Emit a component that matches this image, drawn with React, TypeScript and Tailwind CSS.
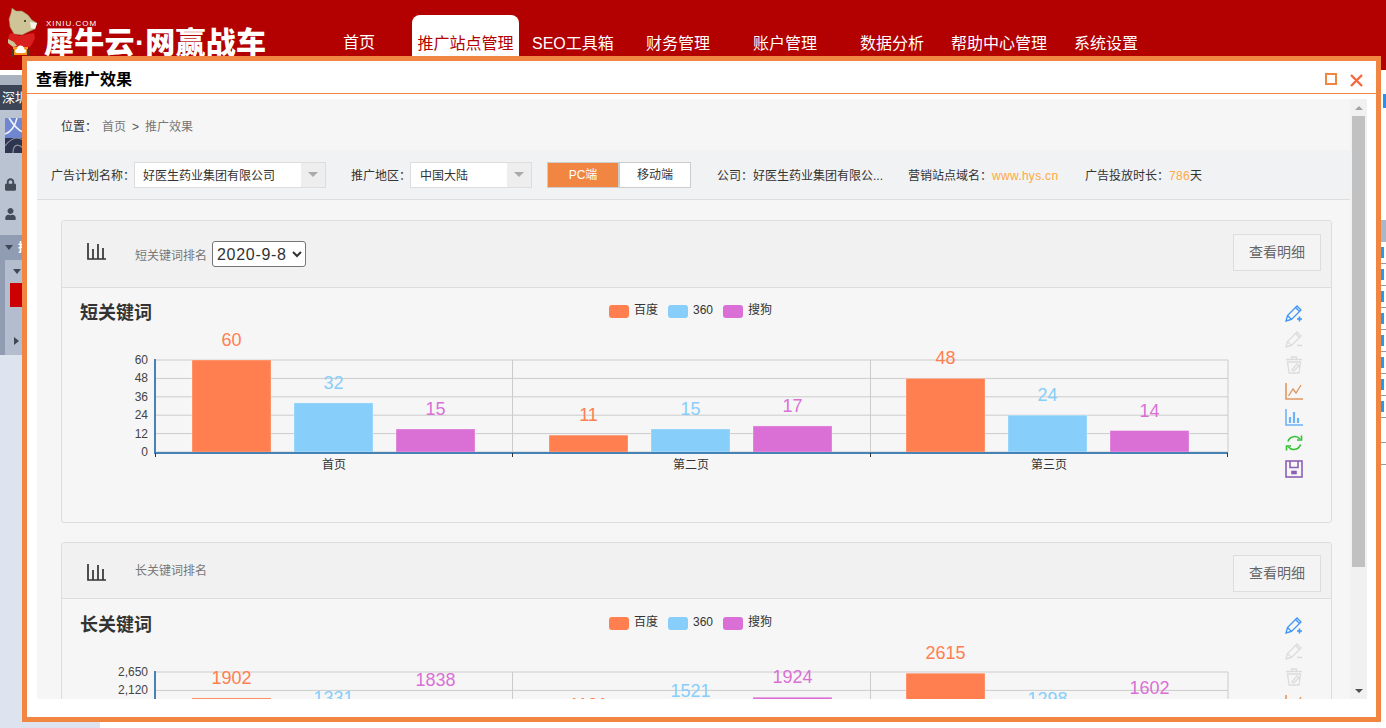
import type { ReactNode } from 'react';
import { FaLock, FaUser } from 'react-icons/fa';

const colors = ['#ff7f50', '#87cefa', '#da70d6'];
const navItems = [
  { label: '首页', width: 'w-[32px]', margin: 'ml-[343px]' },
  { label: 'SEO工具箱', width: 'w-[80px]', margin: 'ml-[13px]' },
  { label: '财务管理', width: 'w-[64px]', margin: 'ml-[34px]' },
  { label: '账户管理', width: 'w-[64px]', margin: 'ml-[43px]' },
  { label: '数据分析', width: 'w-[64px]', margin: 'ml-[43px]' },
  { label: '帮助中心管理', width: 'w-[96px]', margin: 'ml-[27px]' },
  { label: '系统设置', width: 'w-[64px]', margin: 'ml-[27px]' },
];

function Logo() {
  return (
    <svg className="absolute left-[8px] top-[7px]" width="32" height="54" viewBox="0 0 32 54">
      <path d="M4 1l4 3 6 0 6 4 4 5 5 3-2 6-7 3-6 3-8-1-4-7-1-8 2-6z" fill="#cfc497" stroke="#8d7f52" strokeWidth="0.5" />
      <path d="M22 15l7 1-2 6-4-1z" fill="#f6f4ea" />
      <circle cx="17" cy="14" r="1" fill="#222" />
      <path d="M3 26l9 3 8-2 6-1 1 5-3 6-2 3H6l-6-6 1-6z" fill="#d9201f" />
      <path d="M0 32l6 3 3 4-4 1-5-4z" fill="#cfc497" />
      <path d="M5 40h15v8H5z" fill="#f3961c" />
      <path d="M9 46a2 2 0 0 1 0-4 3.500 3.500 0 0 1 7 0 2 2 0 0 1 0 4z" fill="#fff" />
      <path d="M3 42h3v8H3zM19 42h3v8h-3z" fill="#4a3a2a" />
    </svg>
  );
}

function Sidebar() {
  return (
    <div className="w-[100px] shrink-0 flex flex-col bg-[#dde4ef]">
      <div className="h-[5px] bg-white"></div>
      <div className="h-[10px] bg-[#a9b2bf]"></div>
      <div className="h-[25px] bg-[#3b4555] text-white text-[13px] leading-[25px] pl-[2px] whitespace-nowrap">深圳</div>
      <div className="h-[125px] bg-[#b9c3d2] pl-[5px] pt-[8px] text-[#444c5a]">
        <svg width="18" height="35" viewBox="0 0 18 35">
          <rect width="18" height="20" fill="#6f86d0" />
          <rect y="20" width="18" height="15" fill="#2d3550" />
          <path d="M0 16C6 14 10 8 12 0M4 0C8 6 12 12 18 14" stroke="#f1f3f8" strokeWidth="1.6" fill="none" />
          <path d="M0 28C6 20 12 18 18 22M8 35C8 28 12 24 18 30" stroke="#8c8f9c" strokeWidth="1.2" fill="none" />
        </svg>
        <FaLock className="mt-[25px] w-[11px] h-[13px]" />
        <FaUser className="mt-[17px] w-[11px] h-[12px]" />
      </div>
      <div className="h-[25px] bg-[#8f9cb1] flex items-center pl-[5px] gap-[5px] text-white text-[12px] font-bold whitespace-nowrap">
        <span className="w-0 h-0 border-x-[4px] border-x-transparent border-t-[5px] border-t-[#3f4856]"></span>
        推广
      </div>
      <div className="h-[95px] border-l-[5px] border-[#8f9cb1] bg-[#b3bdce] flex flex-col pl-[5px]">
        <div className="h-[23px] flex items-center pl-[3px]">
          <span className="w-0 h-0 border-x-[4px] border-x-transparent border-t-[5px] border-t-[#3f4856]"></span>
        </div>
        <div className="h-[24px] bg-[#cc0000]"></div>
        <div className="h-[48px] flex items-end pb-[10px] pl-[4px]">
          <span className="w-0 h-0 border-y-[4px] border-y-transparent border-l-[5px] border-l-[#3f4856]"></span>
        </div>
      </div>
    </div>
  );
}

function RightStrip() {
  return (
    <div className="w-[5px] shrink-0 flex flex-col">
      <div className="h-[24px]"></div>
      <div className="h-[14px] w-[3px] ml-[2px] bg-[#2f8df0]"></div>
      <div className="h-[112px]"></div>
      <div className="h-[22px] bg-[#a9b7c9]"></div>
      {[0, 1, 2, 3, 4, 5, 6, 7].map((row) => (
        <div key={row} className="h-[22px] border-b border-[#999] flex items-center">
          <span className="w-[3px] h-[11px] bg-[#2a9ae8]"></span>
        </div>
      ))}
      <div className="h-[25px] border-b border-[#999]"></div>
      <div className="h-[22px] border-b border-[#999]"></div>
    </div>
  );
}

function ComboBox({ value, width, textWidth }: { value: string; width: string; textWidth: string }) {
  return (
    <div className={`${width} h-[26px] flex border border-[#ddd] bg-white`}>
      <div className={`${textWidth} pl-[8px] leading-[26px] text-[#333]`}>{value}</div>
      <div className="w-[24px] bg-[#eeeeee] flex items-center justify-center">
        <span className="w-0 h-0 border-x-[5px] border-x-transparent border-t-[5px] border-t-[#aaa]"></span>
      </div>
    </div>
  );
}

function BarGlyph({ className }: { className: string }) {
  return (
    <svg className={className} width="19" height="17" viewBox="0 0 19 17" fill="none" stroke="#333" strokeWidth="1.7">
      <path d="M1 0V16H19" />
      <path d="M6 16V6M11 16V1M16 16V5" />
    </svg>
  );
}

function Toolbox({ x, y }: { x: number; y: number }) {
  return (
    <g transform={`translate(${x} ${y})`} fill="none" strokeWidth="1.3">
      <g stroke="#3d94f6">
        <path d="M1 17l1.500-5.500L12 2l4 4-9.500 9.500zM2.500 11.500l4 4M10.500 3.500l4 4" />
        <path d="M14.500 12.500v5M12 15h5" strokeWidth="1.6" />
      </g>
      <g stroke="#dcdcdc" transform="translate(0 26)">
        <path d="M1 17l1.500-5.500L12 2l4 4-9.500 9.500zM2.500 11.500l4 4M10.500 3.500l4 4" />
        <path d="M12 15.500h5" strokeWidth="1.6" />
      </g>
      <g stroke="#dcdcdc" transform="translate(0 52)">
        <path d="M1 3.500h16M6.500 3V1h5v2M2.500 6h13l-1.500 11H4zM7 14l5-6 2 1.500-5 5.500z" />
      </g>
      <g stroke="#e0965f" transform="translate(0 78)">
        <path d="M1 1v16h17" strokeWidth="1.6" />
        <path d="M3.500 14L8 7l3 4 5-8" />
      </g>
      <g stroke="#6db3f8" transform="translate(0 104)">
        <path d="M1 1v16h17" strokeWidth="1.6" />
        <path d="M5 15V9M9 15V4M13 15v-5" strokeWidth="2.2" />
      </g>
      <g stroke="#32c232" transform="translate(0 130)" strokeWidth="1.6">
        <path d="M3 7.500A7 7 0 0 1 15 5M15.500 10.500A7 7 0 0 1 3.500 13" />
        <path d="M16.500 1.500v4.500h-4.500M1.500 16.500V12H6" />
      </g>
      <g stroke="#8d5fb5" transform="translate(0 156)" strokeWidth="1.6">
        <rect x="1" y="1" width="16" height="16" />
        <path d="M5 1v6.500h8V1" />
        <rect x="7" y="11.500" width="4" height="2" fill="#8d5fb5" />
      </g>
    </g>
  );
}

function KeywordChart({ title, groups, ticks, originY }: { title: string; groups: number[][]; ticks: number[]; originY: number }) {
  const max = ticks[0];
  const top = 360;
  const bottom = 452;
  const groupX = [192, 549, 906];
  const labels = ['首页', '第二页', '第三页'];
  const legend = [
    { name: '百度', x: 609 },
    { name: '360', x: 668 },
    { name: '搜狗', x: 723 },
  ];
  return (
    <svg width="1269" height="234" viewBox={`62 ${originY} 1269 234`} className="block">
      <text x="80" y="319" fontSize="18" fontWeight="700" fill="#333">{title}</text>
      {legend.map((item, i) => (
        <g key={item.name}>
          <rect x={item.x} y="305" width="20" height="13" rx="3" fill={colors[i]} />
          <text x={item.x + 25} y="314" fontSize="12" fill="#333">{item.name}</text>
        </g>
      ))}
      {ticks.map((tick, i) => {
        const y = top + (i * (bottom - top)) / 5;
        return (
          <g key={tick}>
            <line x1="155" x2="1228" y1={y} y2={y} stroke="#ccc" />
            <text x="148" y={y + 4} fontSize="12" fill="#444" textAnchor="end">{tick.toLocaleString('en-US')}</text>
          </g>
        );
      })}
      {[512.5, 870.5, 1228].map((x) => (
        <line key={x} x1={x} x2={x} y1={top} y2={bottom} stroke="#ccc" />
      ))}
      {groups.map((values, g) =>
        values.map((value, i) => {
          const h = (value / max) * (bottom - top);
          const x = groupX[g] + i * 102;
          return (
            <g key={`${g}-${i}`}>
              <rect x={x} y={bottom - h} width="79" height={h} fill={colors[i]} stroke="#fff" strokeOpacity="0.3" />
              <text x={x + 39.5} y={bottom - h - 14} fontSize="18" fill={colors[i]} textAnchor="middle">{value}</text>
            </g>
          );
        }),
      )}
      <line x1="155" x2="155" y1={top - 1} y2="454" stroke="#4682b4" strokeWidth="2" />
      <line x1="154" x2="1228" y1="453" y2="453" stroke="#4682b4" strokeWidth="2" />
      {[155.5, 512.5, 870.5, 1227.5].map((x) => (
        <line key={x} x1={x} x2={x} y1="453" y2="457" stroke="#333" />
      ))}
      {labels.map((label, i) => (
        <text key={label} x={[334, 691, 1049][i]} y="469" fontSize="12" fill="#333" textAnchor="middle">{label}</text>
      ))}
      <Toolbox x={1285} y={304} />
    </svg>
  );
}

function CardHeader({ name, height, glyph, label, button, children }: { name: string; height: string; glyph: string; label: string; button: string; children?: ReactNode }) {
  return (
    <div className={`${height} bg-[#f1f1f1] border-b border-[#ddd] flex items-center pl-[25px] pr-[10px] rounded-t-[3px]`}>
      <BarGlyph className={glyph} />
      <span className={`ml-[29px] text-[12px] text-[#777] ${label}`}>{name}</span>
      {children}
      <button className={`ml-auto w-[88px] h-[37px] border border-[#ddd] bg-[#f4f4f4] text-[14px] text-[#666] ${button}`}>查看明细</button>
    </div>
  );
}

export default function App() {
  return (
    <div className="relative w-full h-screen overflow-hidden bg-white font-[family-name:'Liberation_Sans','Noto_Sans_CJK_SC',sans-serif]">
      <header className="relative h-[70px] bg-[#b30000] overflow-hidden">
        <Logo />
        <div className="absolute left-[46px] top-[19px] text-[8px] leading-[9px] tracking-[1px] text-white">XINIU.COM</div>
        <div className="absolute left-[44px] top-[28px] text-[30px] leading-[30px] tracking-[0.3px] font-black text-white whitespace-nowrap">犀牛云·网赢战车</div>
        <nav className="flex items-end h-[70px] text-[16px] text-white">
          <a className={`${navItems[0].margin} h-[55px] leading-[56px] text-center ${navItems[0].width}`}>首页</a>
          <a className="ml-[37px] w-[107px] h-[55px] bg-white text-[#b30000] rounded-t-[8px] leading-[58px] text-center">推广站点管理</a>
          {navItems.slice(1).map((item) => (
            <a key={item.label} className={`${item.margin} ${item.width} h-[55px] leading-[58px] text-center whitespace-nowrap`}>{item.label}</a>
          ))}
        </nav>
      </header>

      <div className="flex justify-between h-[658px]">
        <Sidebar />
        <RightStrip />
      </div>

      <div className="absolute left-[22px] top-[56px] w-[1359px] h-[666px] border-[5px] border-[#f08642] bg-white flex flex-col text-[12px]">
        <div className="h-[33px] shrink-0 border-b border-[#f08642] flex items-center pt-[6px] pl-[9px] pr-[13px]">
          <span className="text-[16px] font-bold text-black">查看推广效果</span>
          <span className="ml-auto mb-[2px] w-[12px] h-[12px] border-2 border-[#f08642]"></span>
          <svg className="ml-[13px]" width="13" height="13" viewBox="0 0 13 13" stroke="#f5693f" strokeWidth="2.4">
            <path d="M1 1l11 11M12 1L1 12" />
          </svg>
        </div>

        <div className="mt-[5px] ml-[10px] w-[1330px] h-[600px] flex bg-[#f6f6f6]">
          <div className="w-[1313px] overflow-hidden">
            <div className="h-[51px] flex items-center pl-[24px] pt-[4px]">
              <span className="text-[#333]">位置：</span>
              <span className="ml-[5px] text-[#777]">首页</span>
              <span className="ml-[6px] text-[#555]">&gt;</span>
              <span className="ml-[6px] text-[#777]">推广效果</span>
            </div>

            <div className="h-[50px] bg-[#f1f2f4] border-b border-[#ddd] flex items-center pl-[14px] text-[#333] whitespace-nowrap">
              <span className="w-[83px] pt-[2px]">广告计划名称：</span>
              <ComboBox value="好医生药业集团有限公司" width="w-[192px]" textWidth="w-[166px]" />
              <span className="ml-[25px] w-[59px] pt-[2px]">推广地区：</span>
              <ComboBox value="中国大陆" width="w-[122px]" textWidth="w-[96px] pl-[9px]" />
              <button className="ml-[15px] w-[72px] h-[26px] pt-[1px] bg-[#f08642] text-white border border-[#ccc]">PC端</button>
              <button className="w-[72px] h-[26px] pt-[1px] bg-white text-[#333] border border-[#ccc]">移动端</button>
              <span className="ml-[26px] w-[191px] pt-[2px]">公司：好医生药业集团有限公...</span>
              <span className="pt-[2px]">营销站点域名：</span>
              <span className="text-[#ffa940] w-[93px] pt-[2px] tracking-[0.3px]">www.hys.cn</span>
              <span className="pt-[2px]">广告投放时长：</span>
              <span className="text-[#ffa940] pt-[2px] tracking-[0.3px]">786</span>
              <span className="pt-[2px]">天</span>
            </div>

            <div className="pl-[24px] pr-[18px] pt-[20px]">
              <section className="border border-[#ddd] rounded-[3px] bg-[#f6f6f6]">
                <CardHeader name="短关键词排名" height="h-[67px]" glyph="mb-[5px]" label="mt-[4px]" button="mb-[4px]">
                  <select defaultValue="2020-9-8" className="ml-[5px] w-[94px] h-[26px] border border-[#767676] rounded-[3px] bg-white text-[16px] tracking-[0.7px] text-[#333]">
                    <option>2020-9-8</option>
                  </select>
                </CardHeader>
                <KeywordChart
                  title="短关键词"
                  originY={288}
                  ticks={[60, 48, 36, 24, 12, 0]}
                  groups={[[60, 32, 15], [11, 15, 17], [48, 24, 14]]}
                />
              </section>

              <section className="mt-[19px] border border-[#ddd] rounded-[3px] bg-[#f6f6f6]">
                <CardHeader name="长关键词排名" height="h-[56px]" glyph="mt-[3px]" label="" button="mt-[6px]" />
                <KeywordChart
                  title="长关键词"
                  originY={287}
                  ticks={[2650, 2120, 1590, 1060, 530, 0]}
                  groups={[[1902, 1331, 1838], [1131, 1521, 1924], [2615, 1298, 1602]]}
                />
              </section>
            </div>
          </div>

          <div className="w-[17px] bg-[#f1f1f1] flex flex-col items-center">
            <div className="h-[17px] flex items-center justify-center">
              <span className="w-0 h-0 border-x-[4px] border-x-transparent border-b-[4px] border-b-[#a3a3a3]"></span>
            </div>
            <div className="w-[13px] h-[451px] bg-[#c1c1c1]"></div>
            <div className="mt-auto h-[17px] flex items-center justify-center">
              <span className="w-0 h-0 border-x-[4px] border-x-transparent border-t-[4px] border-t-[#505050]"></span>
            </div>
          </div>
        </div>
      </div>
    </div>
  );
}
